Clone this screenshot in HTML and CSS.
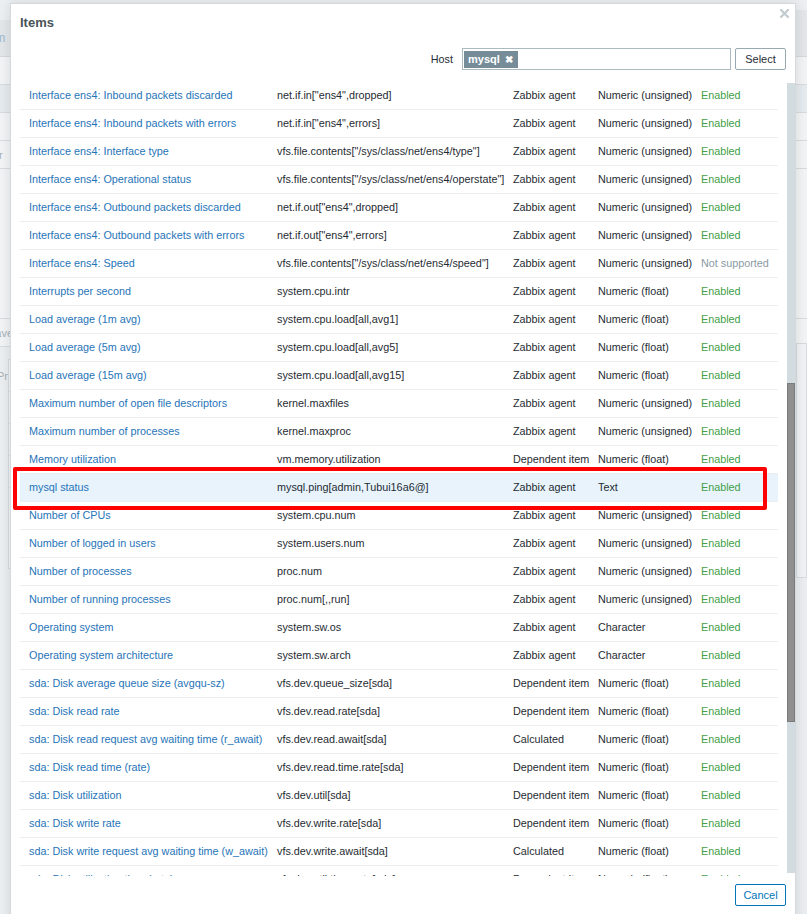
FILE: index.html
```html
<!DOCTYPE html>
<html>
<head>
<meta charset="utf-8">
<link rel="stylesheet" href="styles.css">
</head>
<body>
<div class="page">
  <div class="backdrop">
    <div class="bd-top"></div>
    <div class="bd-bar"><span class="bd-text">Item</span></div>
    <div class="bd-row"></div>
    <div class="bd-row bd-sel"></div>
    <div class="bd-row"></div>
    <div class="bd-row"><span class="bd-text dark">Err</span></div>
    <div class="bd-gap"></div>
    <div class="bd-row"><span class="bd-text dark">Save</span></div>
    <div class="bd-panel">
      <div class="bd-prow"><span class="bd-text dark">Pr</span></div>
      <div class="bd-prow"></div>
      <div class="bd-prow"></div>
      <div class="bd-prow"></div>
    </div>
  </div>
  <div class="bd-right">
    <div class="bdr-band"></div>
    <div class="bdr-box"></div>
  </div>

  <div class="modal">
    <div class="modal-head">
      <h4 class="modal-title">Items</h4>
      <button class="close" aria-label="Close">
        <svg width="9" height="9" viewBox="0 0 9 9"><path d="M1 1L8 8M8 1L1 8" stroke="#c2cbd0" stroke-width="2.2" stroke-linecap="square"/></svg>
      </button>
    </div>
    <div class="filter">
      <label class="filter-label">Host</label>
      <div class="multiselect">
        <span class="tag">mysql <span class="tag-x">&#x2716;</span></span>
      </div>
      <button class="btn-grey">Select</button>
    </div>
    <div class="body">
      <div class="list">
        <table class="items">
          <colgroup>
            <col class="c1"><col class="c2"><col class="c3"><col class="c4"><col class="c5">
          </colgroup>
          <tbody>
            <tr><td><a>Interface ens4: Inbound packets discarded</a></td><td>net.if.in["ens4",dropped]</td><td>Zabbix agent</td><td>Numeric (unsigned)</td><td class="green">Enabled</td></tr>
            <tr><td><a>Interface ens4: Inbound packets with errors</a></td><td>net.if.in["ens4",errors]</td><td>Zabbix agent</td><td>Numeric (unsigned)</td><td class="green">Enabled</td></tr>
            <tr><td><a>Interface ens4: Interface type</a></td><td>vfs.file.contents["/sys/class/net/ens4/type"]</td><td>Zabbix agent</td><td>Numeric (unsigned)</td><td class="green">Enabled</td></tr>
            <tr><td><a>Interface ens4: Operational status</a></td><td>vfs.file.contents["/sys/class/net/ens4/operstate"]</td><td>Zabbix agent</td><td>Numeric (unsigned)</td><td class="green">Enabled</td></tr>
            <tr><td><a>Interface ens4: Outbound packets discarded</a></td><td>net.if.out["ens4",dropped]</td><td>Zabbix agent</td><td>Numeric (unsigned)</td><td class="green">Enabled</td></tr>
            <tr><td><a>Interface ens4: Outbound packets with errors</a></td><td>net.if.out["ens4",errors]</td><td>Zabbix agent</td><td>Numeric (unsigned)</td><td class="green">Enabled</td></tr>
            <tr><td><a>Interface ens4: Speed</a></td><td>vfs.file.contents["/sys/class/net/ens4/speed"]</td><td>Zabbix agent</td><td>Numeric (unsigned)</td><td class="grey">Not supported</td></tr>
            <tr><td><a>Interrupts per second</a></td><td>system.cpu.intr</td><td>Zabbix agent</td><td>Numeric (float)</td><td class="green">Enabled</td></tr>
            <tr><td><a>Load average (1m avg)</a></td><td>system.cpu.load[all,avg1]</td><td>Zabbix agent</td><td>Numeric (float)</td><td class="green">Enabled</td></tr>
            <tr><td><a>Load average (5m avg)</a></td><td>system.cpu.load[all,avg5]</td><td>Zabbix agent</td><td>Numeric (float)</td><td class="green">Enabled</td></tr>
            <tr><td><a>Load average (15m avg)</a></td><td>system.cpu.load[all,avg15]</td><td>Zabbix agent</td><td>Numeric (float)</td><td class="green">Enabled</td></tr>
            <tr><td><a>Maximum number of open file descriptors</a></td><td>kernel.maxfiles</td><td>Zabbix agent</td><td>Numeric (unsigned)</td><td class="green">Enabled</td></tr>
            <tr><td><a>Maximum number of processes</a></td><td>kernel.maxproc</td><td>Zabbix agent</td><td>Numeric (unsigned)</td><td class="green">Enabled</td></tr>
            <tr><td><a>Memory utilization</a></td><td>vm.memory.utilization</td><td>Dependent item</td><td>Numeric (float)</td><td class="green">Enabled</td></tr>
            <tr class="hover"><td><a>mysql status</a></td><td>mysql.ping[admin,Tubui16a6@]</td><td>Zabbix agent</td><td>Text</td><td class="green">Enabled</td></tr>
            <tr><td><a>Number of CPUs</a></td><td>system.cpu.num</td><td>Zabbix agent</td><td>Numeric (unsigned)</td><td class="green">Enabled</td></tr>
            <tr><td><a>Number of logged in users</a></td><td>system.users.num</td><td>Zabbix agent</td><td>Numeric (unsigned)</td><td class="green">Enabled</td></tr>
            <tr><td><a>Number of processes</a></td><td>proc.num</td><td>Zabbix agent</td><td>Numeric (unsigned)</td><td class="green">Enabled</td></tr>
            <tr><td><a>Number of running processes</a></td><td>proc.num[,,run]</td><td>Zabbix agent</td><td>Numeric (unsigned)</td><td class="green">Enabled</td></tr>
            <tr><td><a>Operating system</a></td><td>system.sw.os</td><td>Zabbix agent</td><td>Character</td><td class="green">Enabled</td></tr>
            <tr><td><a>Operating system architecture</a></td><td>system.sw.arch</td><td>Zabbix agent</td><td>Character</td><td class="green">Enabled</td></tr>
            <tr><td><a>sda: Disk average queue size (avgqu-sz)</a></td><td>vfs.dev.queue_size[sda]</td><td>Dependent item</td><td>Numeric (float)</td><td class="green">Enabled</td></tr>
            <tr><td><a>sda: Disk read rate</a></td><td>vfs.dev.read.rate[sda]</td><td>Dependent item</td><td>Numeric (float)</td><td class="green">Enabled</td></tr>
            <tr><td><a>sda: Disk read request avg waiting time (r_await)</a></td><td>vfs.dev.read.await[sda]</td><td>Calculated</td><td>Numeric (float)</td><td class="green">Enabled</td></tr>
            <tr><td><a>sda: Disk read time (rate)</a></td><td>vfs.dev.read.time.rate[sda]</td><td>Dependent item</td><td>Numeric (float)</td><td class="green">Enabled</td></tr>
            <tr><td><a>sda: Disk utilization</a></td><td>vfs.dev.util[sda]</td><td>Dependent item</td><td>Numeric (float)</td><td class="green">Enabled</td></tr>
            <tr><td><a>sda: Disk write rate</a></td><td>vfs.dev.write.rate[sda]</td><td>Dependent item</td><td>Numeric (float)</td><td class="green">Enabled</td></tr>
            <tr><td><a>sda: Disk write request avg waiting time (w_await)</a></td><td>vfs.dev.write.await[sda]</td><td>Calculated</td><td>Numeric (float)</td><td class="green">Enabled</td></tr>
            <tr><td><a>sda: Disk utilization time (rate)</a></td><td>vfs.dev.util.time.rate[sda]</td><td>Dependent item</td><td>Numeric (float)</td><td class="green">Enabled</td></tr>
          </tbody>
        </table>
      </div>
      <div class="scrolltrack"><div class="thumb"></div></div>
    </div>
    <div class="footer">
      <button class="btn-alt">Cancel</button>
    </div>
  </div>

  <div class="annot"></div>
</div>
</body>
</html>
```

FILE: styles.css
```css
* { box-sizing: border-box; }
html, body { margin: 0; padding: 0; }
body {
  font-family: "Liberation Sans", Arial, sans-serif;
  font-size: 10.8px;
  color: #1f2c33;
  background: #eceff1;
}
.page {
  position: relative;
  width: 807px;
  height: 914px;
  overflow: hidden;
  background: #eceff1;
}

/* faded page behind the dialog */
.backdrop {
  width: 807px;
  display: flex;
  flex-direction: column;
}
.bd-top { height: 20px; background: #edf0f2; }
.bd-bar {
  height: 37px;
  background: #e3e7ea;
  border-bottom: 1px solid #d3d9dd;
  display: flex;
  align-items: center;
}
.bd-text {
  margin-left: -18px;
  font-size: 12px;
  color: #9db7cc;
}
.bd-text.dark { color: #a7b0b5; font-size: 11px; margin-left: -12px; }
.bd-row {
  height: 28px;
  background: #f2f4f5;
  border-bottom: 1px solid #d6dce0;
  display: flex;
  align-items: center;
}
.bd-sel { background: #e6ebef; }
.bd-gap { height: 150px; background: #f2f4f5; border-bottom: 1px solid #d6dce0; }
.bd-panel {
  margin: 12px 0 0 8px;
  width: 300px;
  height: 210px;
  border: 1px solid #d6dce0;
  background: #f4f5f6;
}
.bd-prow {
  height: 32px;
  border-bottom: 1px solid #dde2e5;
  display: flex;
  align-items: center;
}
.bd-right {
  position: absolute;
  top: 0;
  right: 0;
  width: 14px;
  height: 914px;
  display: flex;
  flex-direction: column;
}
.bdr-band { height: 20px; margin-top: 10px; background: #e3e7ea; }
.bdr-box {
  margin-top: 313px;
  margin-left: 3px;
  height: 235px;
  border: 1px solid #d6dce0;
  background: #f1f3f4;
}

/* dialog */
.modal {
  position: absolute;
  left: 10px;
  top: 3px;
  width: 786px;
  height: 940px;
  background: #fff;
  border: 1px solid #d3d9dd;
  box-shadow: 0 0 12px rgba(0, 0, 0, 0.12);
  display: flex;
  flex-direction: column;
}
.modal-head {
  position: relative;
  height: 36px;
  padding-left: 9px;
  display: flex;
  align-items: center;
}
.modal-title {
  margin: 0;
  font-size: 13px;
  font-weight: bold;
  color: #4a5358;
}
.close {
  position: absolute;
  right: 5px;
  top: 4px;
  width: 11px;
  height: 11px;
  padding: 0;
  border: 0;
  background: transparent;
  display: flex;
  align-items: center;
  justify-content: center;
}
.filter {
  height: 41px;
  padding: 8px 9px 0 0;
  display: flex;
  justify-content: flex-end;
  align-items: flex-start;
}
.filter-label {
  line-height: 22px;
  margin-right: 9px;
  color: #1f2c33;
}
.multiselect {
  width: 269px;
  height: 22px;
  border: 1px solid #acbbc2;
  padding: 1px;
  display: flex;
  align-items: center;
  background: #fff;
}
.tag {
  height: 17px;
  padding: 0 5px 0 4px;
  background: #768d99;
  color: #fff;
  font-weight: bold;
  font-size: 11px;
  line-height: 17px;
  display: inline-flex;
  align-items: center;
  gap: 5px;
}
.tag-x { font-size: 10px; }
.btn-grey {
  margin-left: 4px;
  width: 51px;
  height: 22px;
  border: 1px solid #98a9b2;
  border-radius: 2px;
  background: #fff;
  font-family: inherit;
  font-size: 11px;
  color: #1f2c33;
  padding: 0;
}
.body {
  height: 795px;
  display: flex;
  padding-left: 9px;
}
.list {
  width: 758px;
  height: 795px;
  overflow: hidden;
}
.items {
  width: 758px;
  border-collapse: collapse;
  table-layout: fixed;
}
.c1 { width: 248px; }
.c2 { width: 236px; }
.c3 { width: 85px; }
.c4 { width: 103px; }
.c5 { width: 86px; }
.items td {
  height: 28px;
  padding: 0 0 0 9px;
  border-bottom: 1px solid #ebeef0;
  white-space: nowrap;
  color: #1f2c33;
  vertical-align: middle;
}
.items td a { color: #1f74b8; }
.items td.green { color: #429e47; }
.items td.grey { color: #8a9aa3; }
.items tr.hover td { background: #e8f3fc; }
.scrolltrack {
  margin: 2px 0 3px 9px;
  width: 8px;
  background: #d2dbe0;
}
.thumb {
  margin-top: 300px;
  height: 339px;
  background: #8f8f8f;
  border: 1px solid #7c7c7c;
}
.footer {
  padding: 8px 9px 0 0;
  display: flex;
  justify-content: flex-end;
}
.btn-alt {
  width: 51px;
  height: 22px;
  border: 1px solid #0275b8;
  border-radius: 2px;
  background: #fff;
  color: #0275b8;
  font-family: inherit;
  font-size: 11px;
  padding: 0;
}

/* red annotation rectangle */
.annot {
  position: absolute;
  left: 13px;
  top: 467px;
  width: 754px;
  height: 43px;
  border: 4px solid #ff0000;
  border-radius: 2px;
}
```
